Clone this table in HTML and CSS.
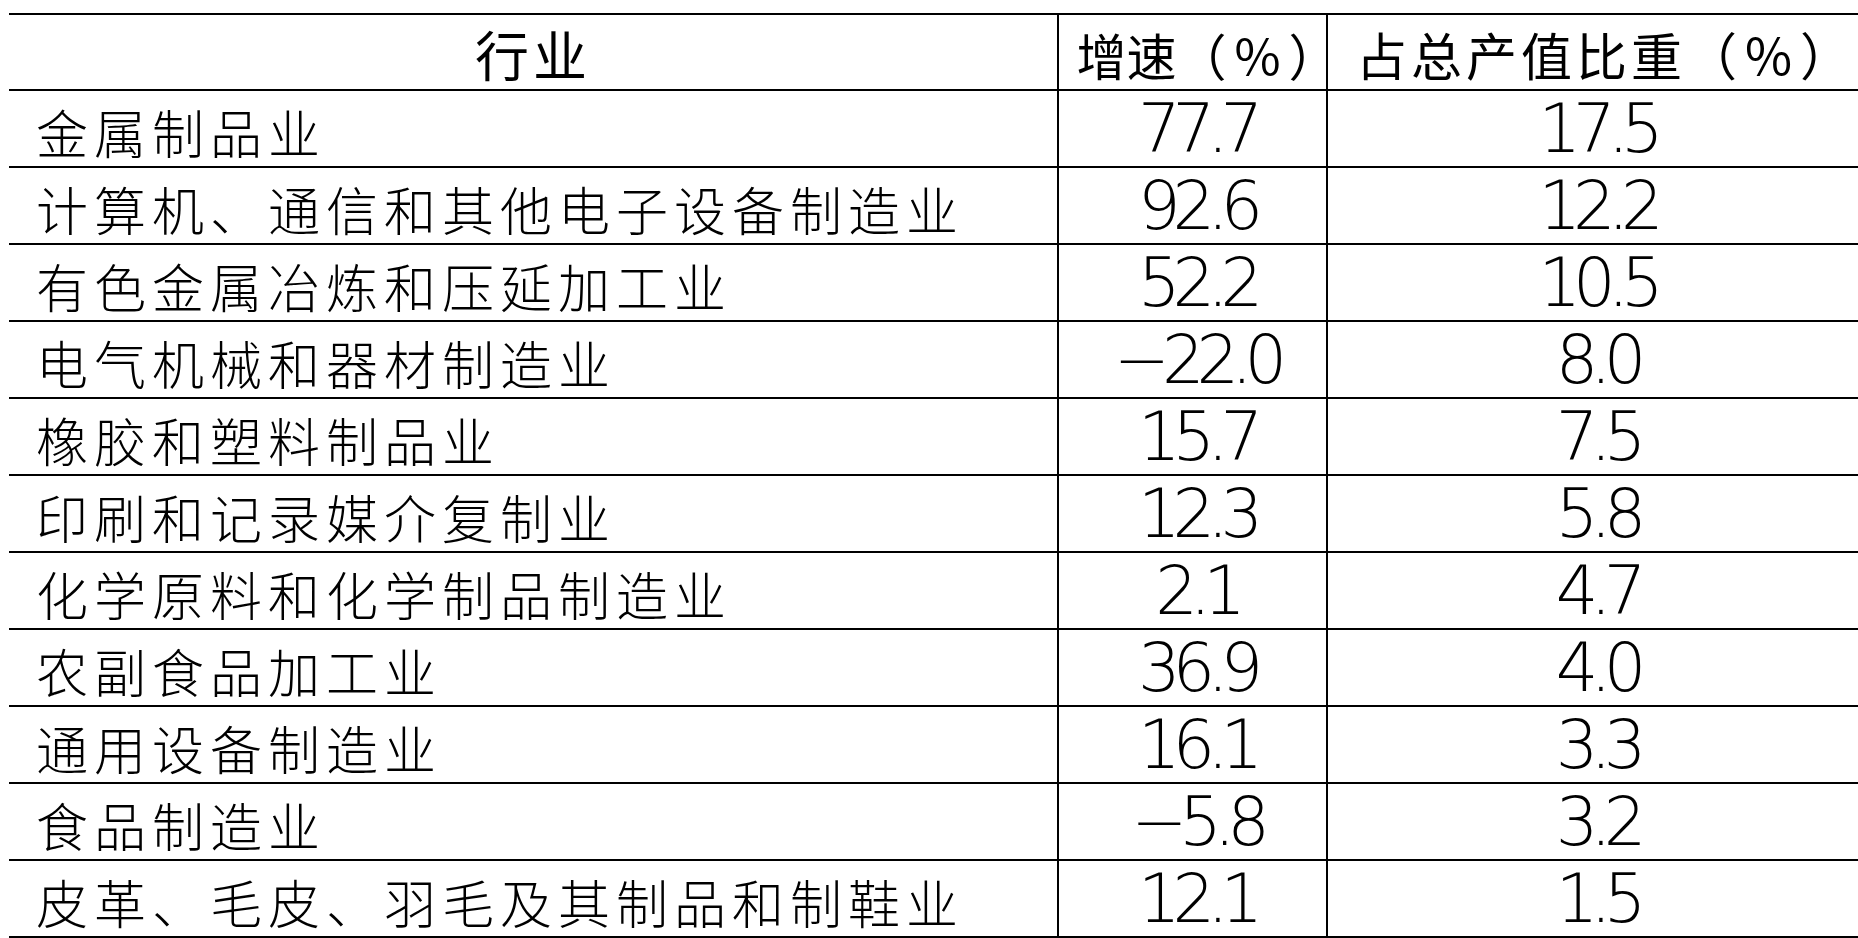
FILE: index.html
```html
<!DOCTYPE html>
<html lang="zh-CN">
<head>
<meta charset="utf-8">
<title>行业增速</title>
<link rel="stylesheet" href="styles.css">
</head>
<body>
<div class="table">
  <div class="cell head c1"><span>行业</span></div>
  <div class="cell head c2"><span class="h2">增速<span class="pct">（％）</span></span></div>
  <div class="cell head c3"><span class="h3">占总产值比重<span class="pct">（％）</span></span></div>

  <div class="cell c1"><span class="label">金属制品业</span></div>
  <div class="cell c2 num"><span>77.7</span></div>
  <div class="cell c3 num"><span>17.5</span></div>

  <div class="cell c1"><span class="label">计算机、通信和其他电子设备制造业</span></div>
  <div class="cell c2 num"><span>92.6</span></div>
  <div class="cell c3 num"><span>12.2</span></div>

  <div class="cell c1"><span class="label">有色金属冶炼和压延加工业</span></div>
  <div class="cell c2 num"><span>52.2</span></div>
  <div class="cell c3 num"><span>10.5</span></div>

  <div class="cell c1"><span class="label">电气机械和器材制造业</span></div>
  <div class="cell c2 num"><span>−22.0</span></div>
  <div class="cell c3 num"><span>8.0</span></div>

  <div class="cell c1"><span class="label">橡胶和塑料制品业</span></div>
  <div class="cell c2 num"><span>15.7</span></div>
  <div class="cell c3 num"><span>7.5</span></div>

  <div class="cell c1"><span class="label">印刷和记录媒介复制业</span></div>
  <div class="cell c2 num"><span>12.3</span></div>
  <div class="cell c3 num"><span>5.8</span></div>

  <div class="cell c1"><span class="label">化学原料和化学制品制造业</span></div>
  <div class="cell c2 num"><span>2.1</span></div>
  <div class="cell c3 num"><span>4.7</span></div>

  <div class="cell c1"><span class="label">农副食品加工业</span></div>
  <div class="cell c2 num"><span>36.9</span></div>
  <div class="cell c3 num"><span>4.0</span></div>

  <div class="cell c1"><span class="label">通用设备制造业</span></div>
  <div class="cell c2 num"><span>16.1</span></div>
  <div class="cell c3 num"><span>3.3</span></div>

  <div class="cell c1"><span class="label">食品制造业</span></div>
  <div class="cell c2 num"><span>−5.8</span></div>
  <div class="cell c3 num"><span>3.2</span></div>

  <div class="cell c1"><span class="label">皮革、毛皮、羽毛及其制品和制鞋业</span></div>
  <div class="cell c2 num"><span>12.1</span></div>
  <div class="cell c3 num"><span>1.5</span></div>
</div>
</body>
</html>
```
FILE: styles.css
```css
html, body {
  margin: 0;
  padding: 0;
  background: #fff;
  overflow: hidden;
}

body {
  font-family: "Noto Sans CJK SC", "Noto Sans", sans-serif;
  color: #000;
}

.table {
  display: grid;
  grid-template-columns: 1048px 269px 532px;
  width: 1849px;
  margin: 13px 0 0 9px;
  border-top: 2px solid #000;
}

.cell {
  box-sizing: border-box;
  height: 77px;
  border-bottom: 2px solid #000;
  display: flex;
  align-items: center;
  white-space: nowrap;
  line-height: 1;
}

.cell.head {
  height: 76px;
  justify-content: center;
  font-size: 54px;
  font-weight: 400;
  padding-top: 4px;
}

.c2, .c3 {
  border-left: 2px solid #000;
}

.c1 {
  padding-left: 27px;
}

.head.c1 {
  padding-left: 0;
  letter-spacing: 4px;
}

.h2 {
  font-size: 50px;
  letter-spacing: 0;
}

.h3 {
  font-size: 51px;
  letter-spacing: 4px;
}

.h2 .pct {
  letter-spacing: 6px;
  margin-right: -36px;
}

.h3 .pct {
  letter-spacing: 6px;
  margin-right: -27px;
}

.label {
  font-size: 52px;
  font-weight: 300;
  letter-spacing: 6px;
  padding-top: 6px;
}

.num {
  justify-content: center;
}

.num span {
  font-family: "DejaVu Sans", Roboto, sans-serif;
  font-weight: 200;
  font-size: 67px;
  letter-spacing: -8px;
  margin-right: -8px;
  padding-top: 2px;
}
```
